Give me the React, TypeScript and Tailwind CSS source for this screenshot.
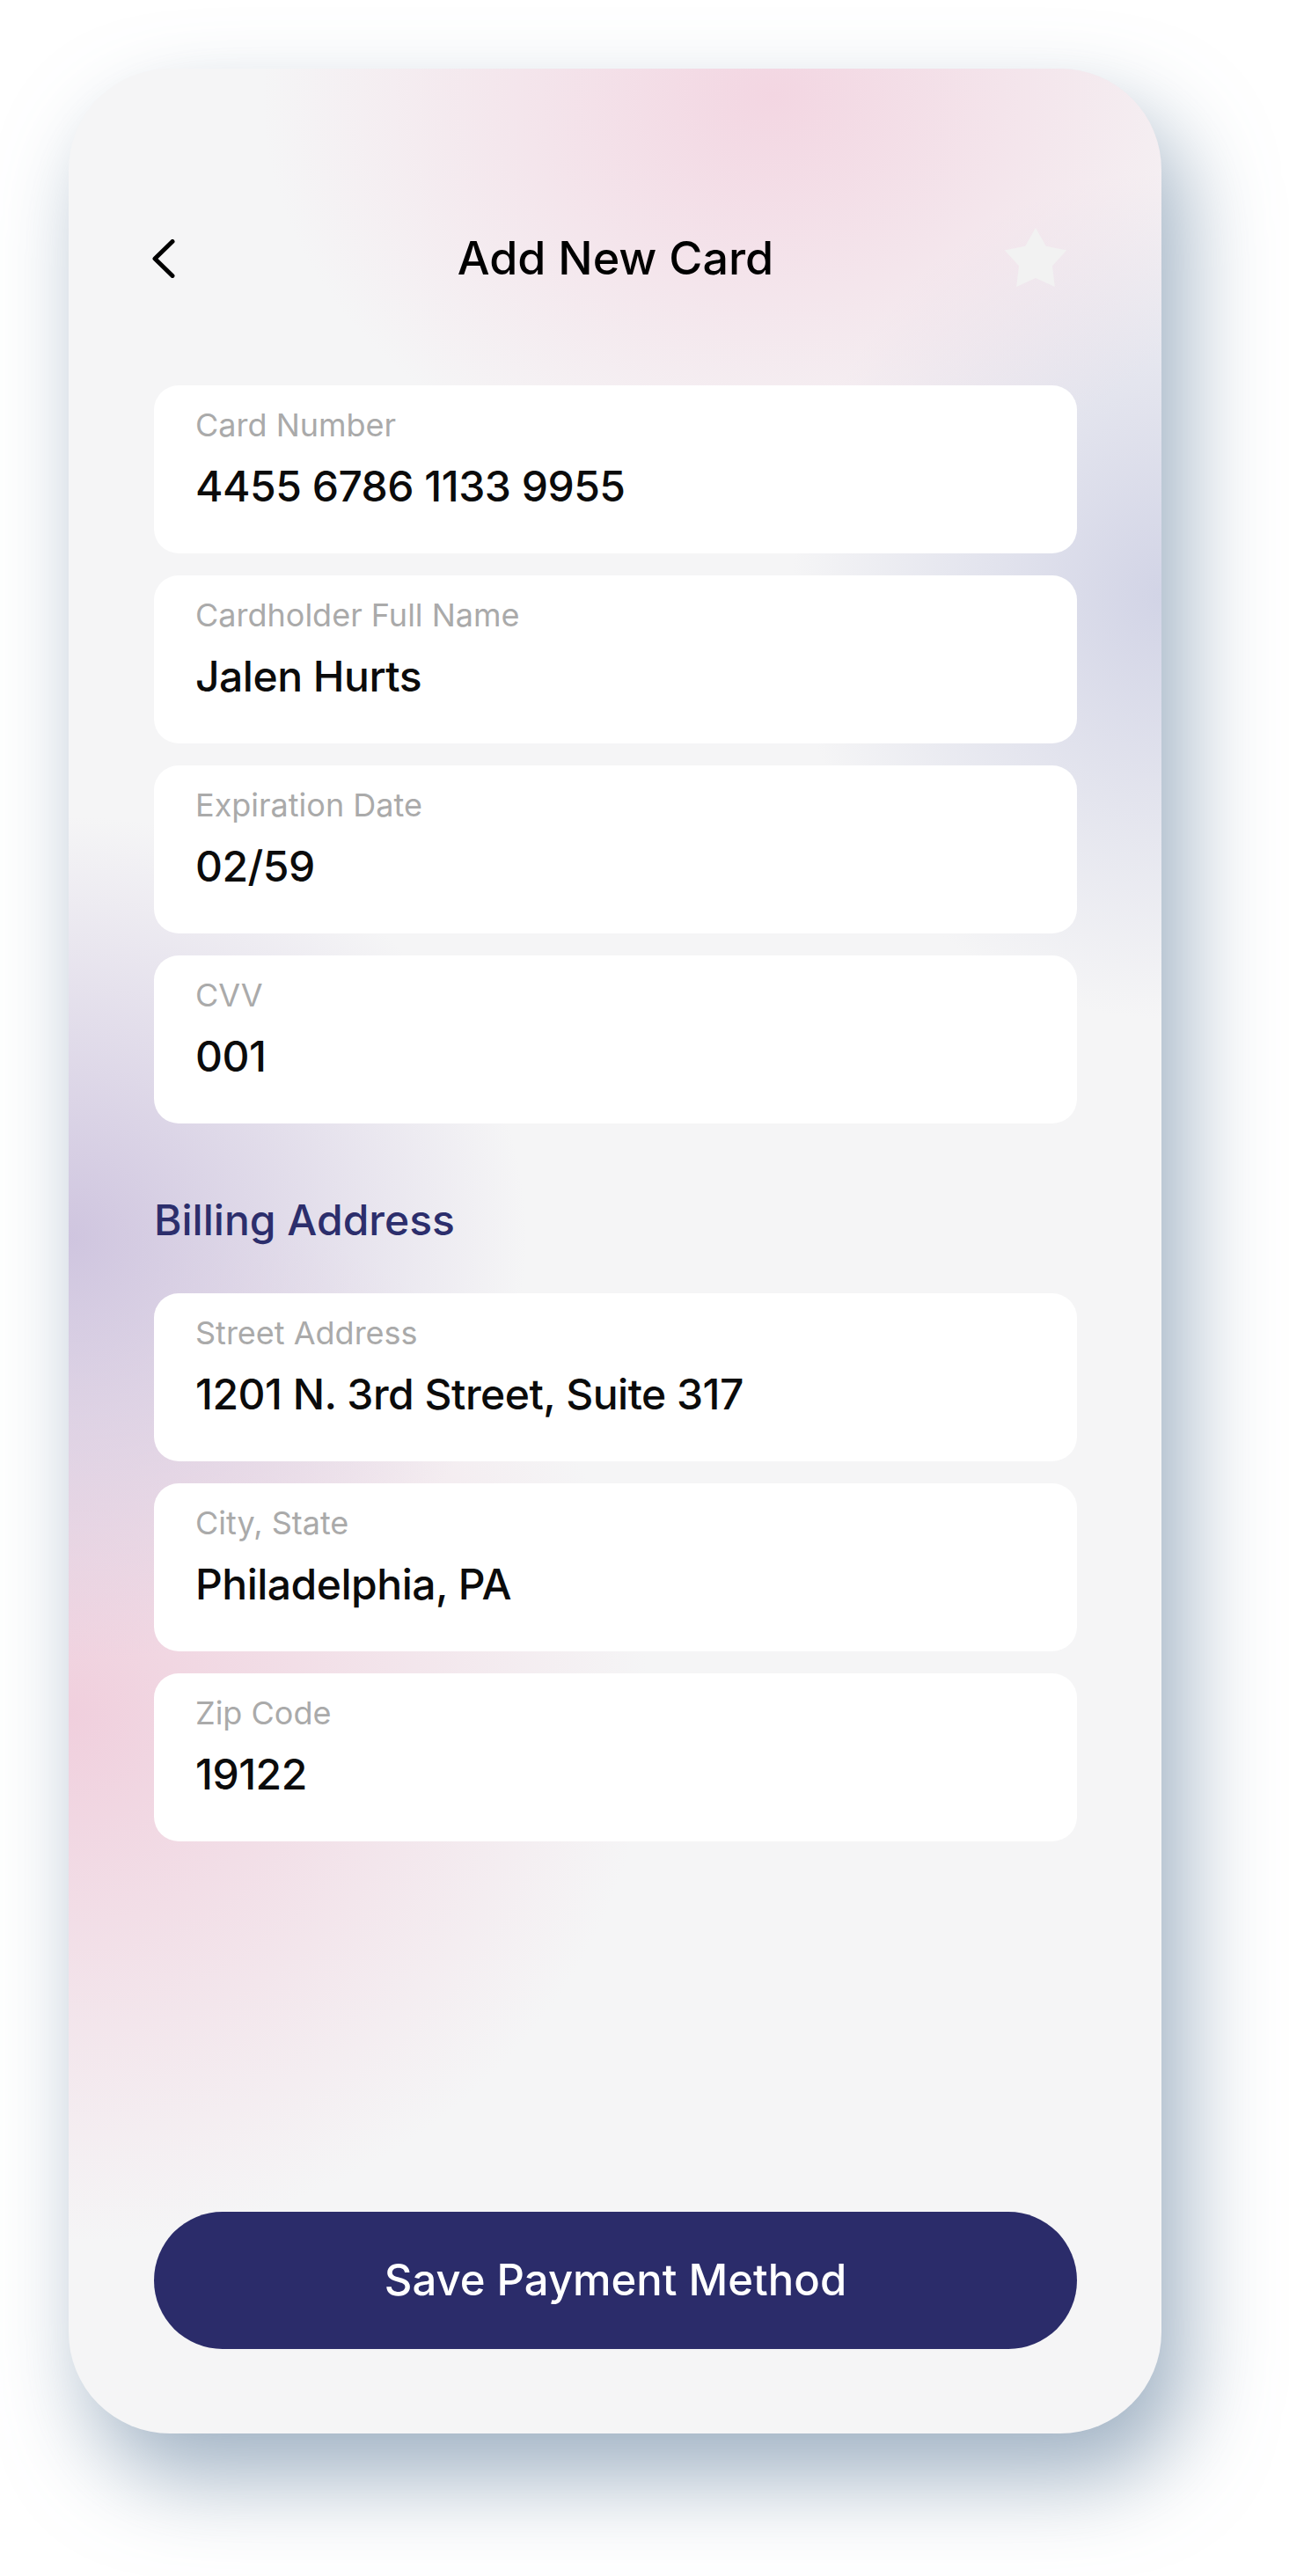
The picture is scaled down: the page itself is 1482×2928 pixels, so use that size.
import React from 'react'

const CARD_FIELDS = [
  { label: 'Card Number', value: '4455 6786 1133 9955' },
  { label: 'Cardholder Full Name', value: 'Jalen Hurts' },
  { label: 'Expiration Date', value: '02/59' },
  { label: 'CVV', value: '001' },
]

const BILLING_FIELDS = [
  { label: 'Street Address', value: '1201 N. 3rd Street, Suite 317' },
  { label: 'City, State', value: 'Philadelphia, PA' },
  { label: 'Zip Code', value: '19122' },
]

function Field({ label, value }: { label: string; value: string }) {
  return (
    <div className="h-[191px] rounded-[28px] bg-white pl-[47px] pt-[27px]">
      <p className="text-[36px] leading-none text-[#aaaaaa]">{label}</p>
      <p className="mt-[28px] text-[48px] leading-none font-medium tracking-[-0.5px] text-[#0b0b0b]">{value}</p>
    </div>
  )
}

export default function App() {
  return (
    <div className="min-h-[2928px] bg-white pl-[78px] pt-[78px] font-['Inter','Noto_Sans',sans-serif]">
      {/* phone */}
      <div className="flex h-[2688px] w-[1242px] flex-col rounded-[115px] bg-[#f5f5f6] bg-[image:radial-gradient(ellipse_580px_460px_at_800px_30px,rgba(243,214,226,1),rgba(243,214,226,0)),radial-gradient(ellipse_420px_480px_at_1242px_600px,rgba(210,212,230,1),rgba(210,212,230,0)),radial-gradient(ellipse_520px_480px_at_0px_1330px,rgba(207,197,223,1),rgba(207,197,223,0)),radial-gradient(ellipse_660px_600px_at_0px_1870px,rgba(240,207,221,1),rgba(240,207,221,0))] pl-[97px] pr-[96px] pt-[180px] pb-[96px] shadow-[25px_50px_100px_rgba(95,125,155,0.6)]">
        {/* header */}
        <div className="grid h-[72px] grid-cols-[1fr_auto_1fr] items-center">
          <svg width="28" height="44" viewBox="0 0 28 44" className="-ml-[2px]" fill="none">
            <path d="M23 2.5 L3 22 L23 41.5" stroke="#000" strokeWidth="5" strokeLinecap="round" strokeLinejoin="round" />
          </svg>
          <h1 className="text-[52px] leading-none font-medium text-black">Add New Card</h1>
          <svg width="74" height="72" viewBox="0 0 74 72" className="mr-[10px] justify-self-end">
            <polygon
              points="37,1 48.8,21.8 72.2,26.6 56,44.2 58.8,67.9 37,58 15.2,67.9 18,44.2 1.8,26.6 25.2,21.8"
              fill="#f2f2f2"
            />
          </svg>
        </div>

        {/* card details */}
        <div className="mt-[108px] flex flex-col gap-[25px]">
          {CARD_FIELDS.map(f => <Field key={f.label} {...f} />)}
        </div>

        <h2 className="mt-[86px] text-[48px] leading-none font-medium text-[#2c2e6c]">Billing Address</h2>

        <div className="mt-[59px] flex flex-col gap-[25px]">
          {BILLING_FIELDS.map(f => <Field key={f.label} {...f} />)}
        </div>

        <div className="flex-1" />

        <button className="h-[156px] w-full rounded-full bg-[#2b2c6a] text-[49px] font-medium text-white">
          Save Payment Method
        </button>
      </div>
    </div>
  )
}
